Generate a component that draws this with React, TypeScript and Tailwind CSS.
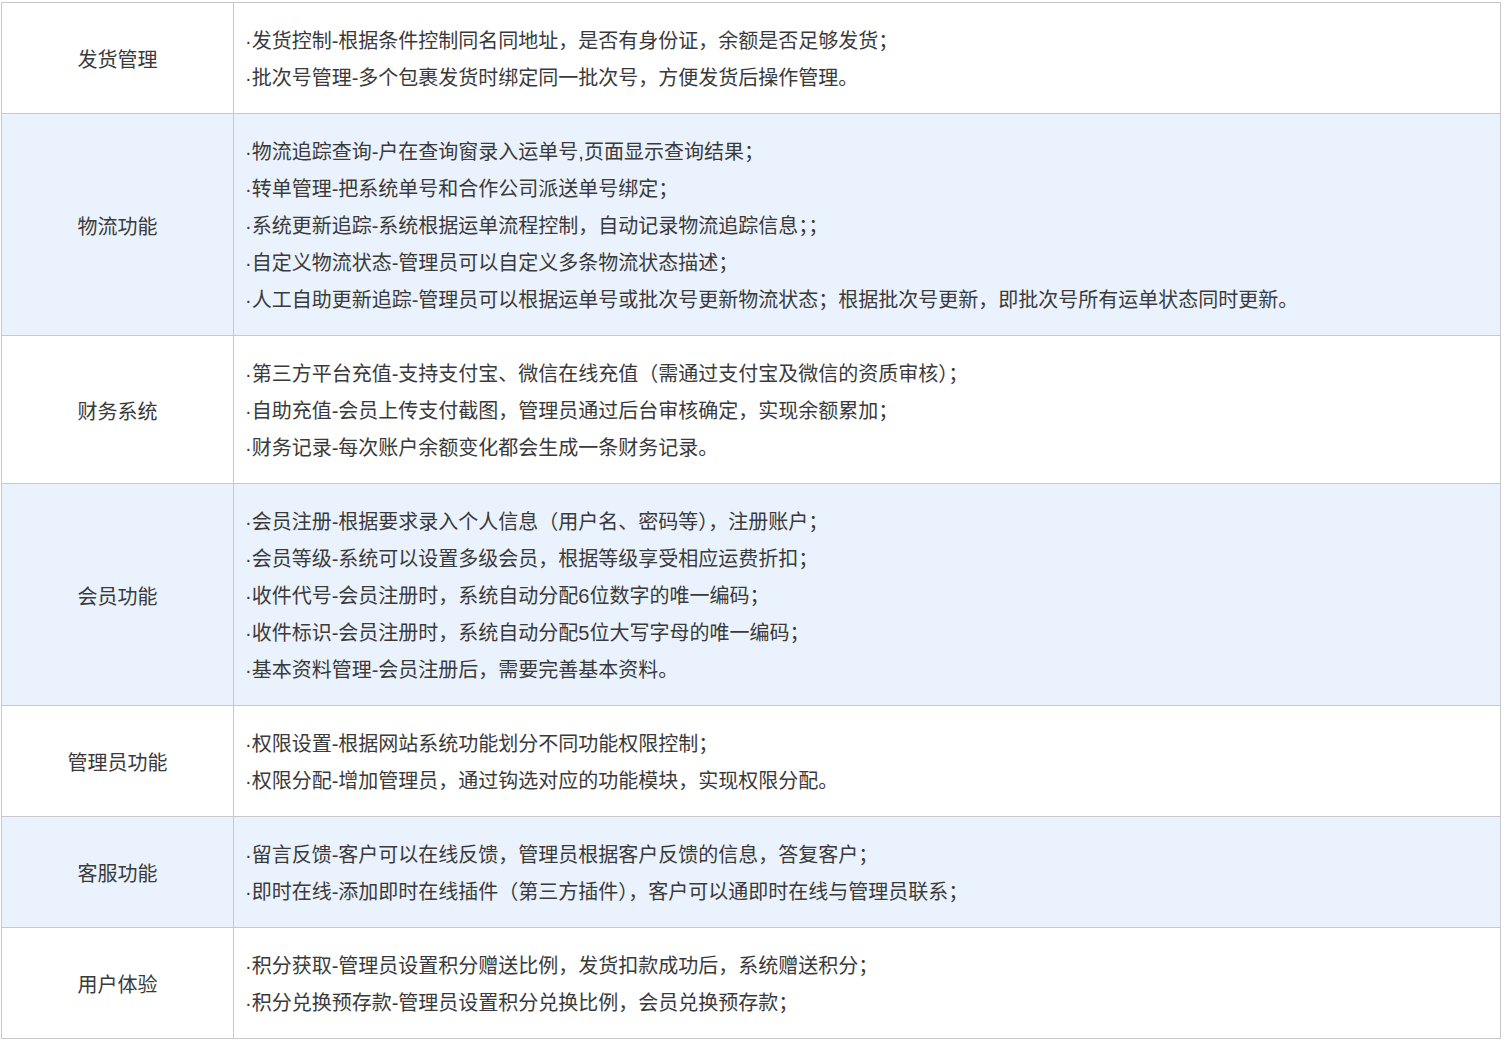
import React from "react";

const rows: { label: string; items: string[] }[] = [
  {
    label: "发货管理",
    items: [
      "·发货控制-根据条件控制同名同地址，是否有身份证，余额是否足够发货；",
      "·批次号管理-多个包裹发货时绑定同一批次号，方便发货后操作管理。",
    ],
  },
  {
    label: "物流功能",
    items: [
      "·物流追踪查询-户在查询窗录入运单号,页面显示查询结果；",
      "·转单管理-把系统单号和合作公司派送单号绑定；",
      "·系统更新追踪-系统根据运单流程控制，自动记录物流追踪信息；；",
      "·自定义物流状态-管理员可以自定义多条物流状态描述；",
      "·人工自助更新追踪-管理员可以根据运单号或批次号更新物流状态；根据批次号更新，即批次号所有运单状态同时更新。",
    ],
  },
  {
    label: "财务系统",
    items: [
      "·第三方平台充值-支持支付宝、微信在线充值（需通过支付宝及微信的资质审核）；",
      "·自助充值-会员上传支付截图，管理员通过后台审核确定，实现余额累加；",
      "·财务记录-每次账户余额变化都会生成一条财务记录。",
    ],
  },
  {
    label: "会员功能",
    items: [
      "·会员注册-根据要求录入个人信息（用户名、密码等），注册账户；",
      "·会员等级-系统可以设置多级会员，根据等级享受相应运费折扣；",
      "·收件代号-会员注册时，系统自动分配6位数字的唯一编码；",
      "·收件标识-会员注册时，系统自动分配5位大写字母的唯一编码；",
      "·基本资料管理-会员注册后，需要完善基本资料。",
    ],
  },
  {
    label: "管理员功能",
    items: [
      "·权限设置-根据网站系统功能划分不同功能权限控制；",
      "·权限分配-增加管理员，通过钩选对应的功能模块，实现权限分配。",
    ],
  },
  {
    label: "客服功能",
    items: [
      "·留言反馈-客户可以在线反馈，管理员根据客户反馈的信息，答复客户；",
      "·即时在线-添加即时在线插件（第三方插件），客户可以通即时在线与管理员联系；",
    ],
  },
  {
    label: "用户体验",
    items: [
      "·积分获取-管理员设置积分赠送比例，发货扣款成功后，系统赠送积分；",
      "·积分兑换预存款-管理员设置积分兑换比例，会员兑换预存款；",
    ],
  },
];

export default function App() {
  return (
    <div
      className="bg-white min-h-screen pt-[2px] pl-[1px] text-[#3a3a3a] text-[20px]"
      style={{ fontFamily: '"Liberation Sans", "Noto Sans CJK SC", sans-serif' }}
    >
      <table className="border-collapse w-[1500px] table-fixed">
        <colgroup>
          <col className="w-[232px]" />
          <col />
        </colgroup>
        <tbody>
          {rows.map((r, i) => (
            <tr key={r.label} className={i % 2 === 1 ? "bg-[#eaf2fd]" : "bg-white"}>
              <td className="border border-[#c6c8cc] text-center align-middle pt-[4px]">{r.label}</td>
              <td className="border border-[#c6c8cc] pl-[11px] pt-[20px] pb-[16px] leading-[37px] align-middle">
                {r.items.map((t) => (
                  <div key={t} className="whitespace-nowrap">
                    {t}
                  </div>
                ))}
              </td>
            </tr>
          ))}
        </tbody>
      </table>
    </div>
  );
}
